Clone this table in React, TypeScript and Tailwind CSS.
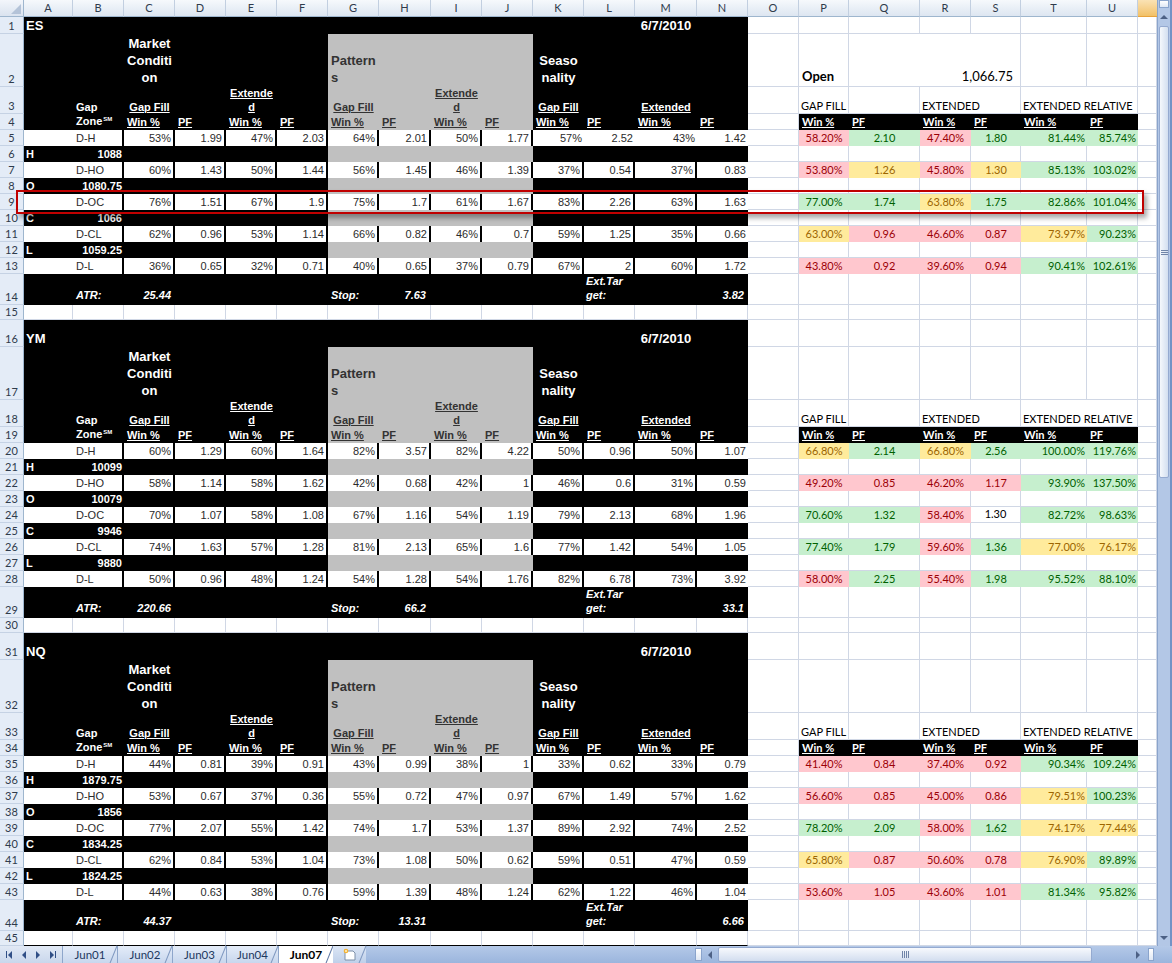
import React from "react";

type Tone = "r" | "y" | "g" | "n";

interface Block {
  start: number;
  sym: string;
  titleH: string;
  rows: string[][];
  levels: [string, string][];
  atr: string;
  stop: string;
  ext: string;
  right: [string, Tone][][];
  open?: boolean;
}

const W: Record<string, string> = {
  A: "w-[49px]", B: "w-[51px]", C: "w-[51px]", D: "w-[51px]", E: "w-[51px]", F: "w-[51px]",
  G: "w-[51px]", H: "w-[52px]", I: "w-[51px]", J: "w-[51px]", K: "w-[51px]", L: "w-[51px]",
  M: "w-[62px]", N: "w-[51px]", O: "w-[51px]", P: "w-[50px]", Q: "w-[71px]", R: "w-[51px]",
  S: "w-[50px]", T: "w-[66px]", U: "w-[51px]", V: "w-[19px]",
};

const LC = ["A", "B", "C", "D", "E", "F", "G", "H", "I", "J", "K", "L", "M", "N"];
const RC = ["O", "P", "Q", "R", "S", "T", "U", "V"];
const ALL = [...LC, ...RC];
const GRAY = new Set(["G", "H", "I", "J"]);
const ZONES = ["D-H", "D-HO", "D-OC", "D-CL", "D-L"];

const grid = "bg-white border-r border-b border-[#d0d7e5]";
const TONE: Record<Tone, string> = {
  r: "bg-[#ffc7ce] text-[#9c0006]",
  y: "bg-[#ffeb9c] text-[#9c6500]",
  g: "bg-[#c6efce] text-[#006100]",
  n: "bg-white text-black border-r border-b border-[#d0d7e5]",
};

const BLOCKS: Block[] = [
  {
    start: 1, sym: "ES", titleH: "h-[17px]", open: true,
    rows: [
      ["53%", "1.99", "47%", "2.03", "64%", "2.01", "50%", "1.77", "57%", "2.52", "43%", "1.42"],
      ["60%", "1.43", "50%", "1.44", "56%", "1.45", "46%", "1.39", "37%", "0.54", "37%", "0.83"],
      ["76%", "1.51", "67%", "1.9", "75%", "1.7", "61%", "1.67", "83%", "2.26", "63%", "1.63"],
      ["62%", "0.96", "53%", "1.14", "66%", "0.82", "46%", "0.7", "59%", "1.25", "35%", "0.66"],
      ["36%", "0.65", "32%", "0.71", "40%", "0.65", "37%", "0.79", "67%", "2", "60%", "1.72"],
    ],
    levels: [["H", "1088"], ["O", "1080.75"], ["C", "1066"], ["L", "1059.25"]],
    atr: "25.44", stop: "7.63", ext: "3.82",
    right: [
      [["58.20%", "r"], ["2.10", "g"], ["47.40%", "r"], ["1.80", "g"], ["81.44%", "g"], ["85.74%", "g"]],
      [["53.80%", "r"], ["1.26", "y"], ["45.80%", "r"], ["1.30", "y"], ["85.13%", "g"], ["103.02%", "g"]],
      [["77.00%", "g"], ["1.74", "g"], ["63.80%", "y"], ["1.75", "g"], ["82.86%", "g"], ["101.04%", "g"]],
      [["63.00%", "y"], ["0.96", "r"], ["46.60%", "r"], ["0.87", "r"], ["73.97%", "y"], ["90.23%", "g"]],
      [["43.80%", "r"], ["0.92", "r"], ["39.60%", "r"], ["0.94", "r"], ["90.41%", "g"], ["102.61%", "g"]],
    ],
  },
  {
    start: 16, sym: "YM", titleH: "h-[27px]",
    rows: [
      ["60%", "1.29", "60%", "1.64", "82%", "3.57", "82%", "4.22", "50%", "0.96", "50%", "1.07"],
      ["58%", "1.14", "58%", "1.62", "42%", "0.68", "42%", "1", "46%", "0.6", "31%", "0.59"],
      ["70%", "1.07", "58%", "1.08", "67%", "1.16", "54%", "1.19", "79%", "2.13", "68%", "1.96"],
      ["74%", "1.63", "57%", "1.28", "81%", "2.13", "65%", "1.6", "77%", "1.42", "54%", "1.05"],
      ["50%", "0.96", "48%", "1.24", "54%", "1.28", "54%", "1.76", "82%", "6.78", "73%", "3.92"],
    ],
    levels: [["H", "10099"], ["O", "10079"], ["C", "9946"], ["L", "9880"]],
    atr: "220.66", stop: "66.2", ext: "33.1",
    right: [
      [["66.80%", "y"], ["2.14", "g"], ["66.80%", "y"], ["2.56", "g"], ["100.00%", "g"], ["119.76%", "g"]],
      [["49.20%", "r"], ["0.85", "r"], ["46.20%", "r"], ["1.17", "r"], ["93.90%", "g"], ["137.50%", "g"]],
      [["70.60%", "g"], ["1.32", "g"], ["58.40%", "r"], ["1.30", "n"], ["82.72%", "g"], ["98.63%", "g"]],
      [["77.40%", "g"], ["1.79", "g"], ["59.60%", "r"], ["1.36", "g"], ["77.00%", "y"], ["76.17%", "y"]],
      [["58.00%", "r"], ["2.25", "g"], ["55.40%", "r"], ["1.98", "g"], ["95.52%", "g"], ["88.10%", "g"]],
    ],
  },
  {
    start: 31, sym: "NQ", titleH: "h-[27px]",
    rows: [
      ["44%", "0.81", "39%", "0.91", "43%", "0.99", "38%", "1", "33%", "0.62", "33%", "0.79"],
      ["53%", "0.67", "37%", "0.36", "55%", "0.72", "47%", "0.97", "67%", "1.49", "57%", "1.62"],
      ["77%", "2.07", "55%", "1.42", "74%", "1.7", "53%", "1.37", "89%", "2.92", "74%", "2.52"],
      ["62%", "0.84", "53%", "1.04", "73%", "1.08", "50%", "0.62", "59%", "0.51", "47%", "0.59"],
      ["44%", "0.63", "38%", "0.76", "59%", "1.39", "48%", "1.24", "62%", "1.22", "46%", "1.04"],
    ],
    levels: [["H", "1879.75"], ["O", "1856"], ["C", "1834.25"], ["L", "1824.25"]],
    atr: "44.37", stop: "13.31", ext: "6.66",
    right: [
      [["41.40%", "r"], ["0.84", "r"], ["37.40%", "r"], ["0.92", "r"], ["90.34%", "g"], ["109.24%", "g"]],
      [["56.60%", "r"], ["0.85", "r"], ["45.00%", "r"], ["0.86", "r"], ["79.51%", "y"], ["100.23%", "g"]],
      [["78.20%", "g"], ["2.09", "g"], ["58.00%", "r"], ["1.62", "g"], ["74.17%", "y"], ["77.44%", "y"]],
      [["65.80%", "y"], ["0.87", "r"], ["50.60%", "r"], ["0.78", "r"], ["76.90%", "y"], ["89.89%", "g"]],
      [["53.60%", "r"], ["1.05", "r"], ["43.60%", "r"], ["1.01", "r"], ["81.34%", "g"], ["95.82%", "g"]],
    ],
  },
];

function Cell({ c, className = "", children }: { c: string; className?: string; children?: React.ReactNode }) {
  return <div className={`${W[c]} shrink-0 h-full ${className}`}>{children}</div>;
}

function Row({ n, h, left, right }: { n: number; h: string; left: React.ReactNode; right: React.ReactNode }) {
  return (
    <div className={`flex ${h}`}>
      <div className="w-[24px] shrink-0 h-full flex items-end justify-center pb-[2px] bg-[#e4ecf7] border-r border-r-[#9eb6ce] border-b border-b-[#c5d2e4] font-['Lato',sans-serif] text-[11px] leading-none text-[#2f3b4c]">
        {n}
      </div>
      <div className="contents font-['Liberation_Sans',Arial,sans-serif]">{left}</div>
      <div className="contents font-['Lato',sans-serif]">{right}</div>
    </div>
  );
}

const bg = (c: string) => (GRAY.has(c) ? "bg-[#c0c0c0]" : "bg-black");
const hWhite = "text-white font-bold";
const hDark = "text-[#333333] font-bold";
const ul = "underline decoration-1 underline-offset-[1px]";

function LeftTitle({ sym }: { sym: string }) {
  return (
    <>
      {LC.map((c) => (
        <Cell key={c} c={c} className="bg-black flex items-end pb-[1px]">
          {c === "A" && <span className={`${hWhite} pl-[2px] text-[13px] leading-[15px]`}>{sym}</span>}
          {c === "M" && <span className={`${hWhite} w-full text-center text-[13px] leading-[15px]`}>6/7/2010</span>}
        </Cell>
      ))}
    </>
  );
}

function LeftHead2() {
  const big = "text-[13px] leading-[17px] whitespace-nowrap";
  return (
    <>
      {LC.map((c) => (
        <Cell key={c} c={c} className={`${bg(c)} flex flex-col justify-end pb-[1px]`}>
          {c === "C" && <div className={`${hWhite} ${big} text-center`}>Market<br />Conditi<br />on</div>}
          {c === "G" && <div className={`${hDark} ${big} pl-[3px]`}>Pattern<br />s</div>}
          {c === "K" && <div className={`${hWhite} ${big} text-center`}>Seaso<br />nality</div>}
        </Cell>
      ))}
    </>
  );
}

function LeftHead3() {
  const t = "text-[11px] leading-[14px] whitespace-nowrap";
  const content: Record<string, React.ReactNode> = {
    B: <div className={`${hWhite} ${t} pl-[3px]`}>Gap</div>,
    C: <div className={`${hWhite} ${t} text-center`}><span className={ul}>Gap Fill</span></div>,
    E: <div className={`${hWhite} ${t} text-center ${ul}`}>Extende<br />d</div>,
    G: <div className={`${hDark} ${t} text-center`}><span className={ul}>Gap Fill</span></div>,
    I: <div className={`${hDark} ${t} text-center ${ul}`}>Extende<br />d</div>,
    K: <div className={`${hWhite} ${t} text-center`}><span className={ul}>Gap Fill</span></div>,
    M: <div className={`${hWhite} ${t} text-center`}><span className={ul}>Extended</span></div>,
  };
  return (
    <>
      {LC.map((c) => (
        <Cell key={c} c={c} className={`${bg(c)} flex flex-col justify-end`}>
          {content[c]}
        </Cell>
      ))}
    </>
  );
}

function LeftHead4() {
  const labels: Record<string, string> = {
    C: "Win %", D: "PF", E: "Win %", F: "PF", G: "Win %", H: "PF", I: "Win %", J: "PF",
    K: "Win %", L: "PF", M: "Win %", N: "PF",
  };
  return (
    <>
      {LC.map((c) => (
        <Cell key={c} c={c} className={`${bg(c)} flex items-center text-[11px] leading-[14px] whitespace-nowrap`}>
          {c === "B" && (
            <span className={`${hWhite} pl-[3px]`}>
              Zone<span className="relative -top-[4px] ml-[1px] text-[6px]">SM</span>
            </span>
          )}
          {labels[c] && (
            <span className={`${GRAY.has(c) ? hDark : hWhite} ${ul} pl-[3px]`}>{labels[c]}</span>
          )}
        </Cell>
      ))}
    </>
  );
}

function LeftData({ zone, vals, plainK }: { zone: string; vals: string[]; plainK: boolean }) {
  const t = "text-[11px] text-[#2b2b2b]";
  return (
    <>
      <Cell c="A" className="bg-white" />
      <Cell c="B" className={`bg-white border-r-2 border-black flex items-center pl-[3px] ${t}`}>{zone}</Cell>
      {vals.map((v, i) => {
        const c = LC[i + 2];
        const br = c === "N" || (plainK && i >= 8) ? "" : "border-r-2 border-black";
        return (
          <Cell key={c} c={c} className={`bg-white ${br} flex items-center justify-end pr-[2px] ${t}`}>
            {v}
          </Cell>
        );
      })}
    </>
  );
}

function LeftLevel({ l }: { l: [string, string] }) {
  const t = `${hWhite} text-[11px] leading-[14px]`;
  return (
    <>
      {LC.map((c) => (
        <Cell key={c} c={c} className={`${bg(c)} flex items-center`}>
          {c === "A" && <span className={`${t} pl-[2px]`}>{l[0]}</span>}
          {c === "B" && <span className={`${t} w-full text-right pr-[2px]`}>{l[1]}</span>}
        </Cell>
      ))}
    </>
  );
}

function LeftAtr({ b }: { b: Block }) {
  const t = "text-white font-bold italic text-[11px] leading-[14px] whitespace-nowrap";
  const content: Record<string, React.ReactNode> = {
    B: <div className={`${t} pl-[3px]`}>ATR:</div>,
    C: <div className={`${t} text-right pr-[4px]`}>{b.atr}</div>,
    G: <div className={`${t} pl-[3px]`}>Stop:</div>,
    H: <div className={`${t} text-right pr-[5px]`}>{b.stop}</div>,
    L: <div className={`${t} pl-[2px]`}>Ext.Tar<br />get:</div>,
    N: <div className={`${t} text-right pr-[4px]`}>{b.ext}</div>,
  };
  return (
    <>
      {LC.map((c) => (
        <Cell key={c} c={c} className="bg-black flex flex-col justify-end pb-[3px]">
          {content[c]}
        </Cell>
      ))}
    </>
  );
}

function LeftBlank({ edge }: { edge: boolean }) {
  return (
    <>
      {LC.map((c) => (
        <Cell key={c} c={c} className={`bg-white border-r border-[#d0d7e5] border-b ${edge ? "border-b-black" : ""}`} />
      ))}
    </>
  );
}

function RightPlain() {
  return (
    <>
      {RC.map((c) => (
        <Cell key={c} c={c} className={grid} />
      ))}
    </>
  );
}

function RightOpen() {
  return (
    <>
      <Cell c="O" className={grid} />
      <Cell c="P" className={`${grid} flex items-end pb-[2px] pl-[3px]`}>
        <span className="font-bold text-[13px] leading-[16px] text-black">Open</span>
      </Cell>
      <div className={`w-[172px] shrink-0 h-full ${grid} flex items-end justify-end pb-[2px] pr-[7px]`}>
        <span className="text-[13px] leading-[16px] text-black">1,066.75</span>
      </div>
      <Cell c="T" className={grid} />
      <Cell c="U" className={grid} />
      <Cell c="V" className={grid} />
    </>
  );
}

function RightHead3() {
  const t = "relative z-[1] text-[11px] leading-[14px] text-black whitespace-nowrap pl-[2px]";
  return (
    <>
      <Cell c="O" className={grid} />
      <Cell c="P" className={`${grid} flex items-end`}><span className={t}>GAP FILL</span></Cell>
      <Cell c="Q" className={grid} />
      <Cell c="R" className="bg-white border-b border-[#d0d7e5] flex items-end"><span className={t}>EXTENDED</span></Cell>
      <Cell c="S" className={grid} />
      <Cell c="T" className="bg-white border-b border-[#d0d7e5] flex items-end"><span className={t}>EXTENDED RELATIVE</span></Cell>
      <Cell c="U" className={grid} />
      <Cell c="V" className={grid} />
    </>
  );
}

function RightHead4() {
  const labels = ["Win %", "PF", "Win %", "PF", "Win %", "PF"];
  return (
    <>
      <Cell c="O" className={grid} />
      {labels.map((l, i) => (
        <Cell key={i} c={RC[i + 1]} className="bg-black flex items-center pl-[3px]">
          <span className={`text-white font-bold text-[11px] leading-[14px] ${ul}`}>{l}</span>
        </Cell>
      ))}
      <Cell c="V" className={grid} />
    </>
  );
}

function RightData({ vals }: { vals: [string, Tone][] }) {
  return (
    <>
      <Cell c="O" className={grid} />
      {vals.map(([v, tone], i) => {
        const c = RC[i + 1];
        const align = i >= 4 ? "justify-end pr-[2px]" : "justify-center";
        return (
          <Cell key={c} c={c} className={`${TONE[tone]} flex items-center ${align} text-[11px]`}>
            {v}
          </Cell>
        );
      })}
      <Cell c="V" className={grid} />
    </>
  );
}

function BlockRows({ b, last }: { b: Block; last: boolean }) {
  const s = b.start;
  const out: React.ReactNode[] = [];
  out.push(<Row key="t" n={s} h={b.titleH} left={<LeftTitle sym={b.sym} />} right={<RightPlain />} />);
  out.push(<Row key="h2" n={s + 1} h="h-[53px]" left={<LeftHead2 />} right={b.open ? <RightOpen /> : <RightPlain />} />);
  out.push(<Row key="h3" n={s + 2} h="h-[27px]" left={<LeftHead3 />} right={<RightHead3 />} />);
  out.push(<Row key="h4" n={s + 3} h="h-[16px]" left={<LeftHead4 />} right={<RightHead4 />} />);
  for (let i = 0; i < 9; i++) {
    const n = s + 4 + i;
    if (i % 2 === 0) {
      const k = i / 2;
      out.push(
        <Row
          key={n}
          n={n}
          h="h-[16px]"
          left={<LeftData zone={ZONES[k]} vals={b.rows[k]} plainK={b.start === 1 && k === 0} />}
          right={<RightData vals={b.right[k]} />}
        />
      );
    } else {
      const k = (i - 1) / 2;
      out.push(<Row key={n} n={n} h="h-[16px]" left={<LeftLevel l={b.levels[k]} />} right={<RightPlain />} />);
    }
  }
  out.push(<Row key="atr" n={s + 13} h="h-[31px]" left={<LeftAtr b={b} />} right={<RightPlain />} />);
  out.push(<Row key="bl" n={s + 14} h="h-[15px]" left={<LeftBlank edge={last} />} right={<RightPlain />} />);
  return <>{out}</>;
}

function ColHeader() {
  return (
    <div className="flex h-[17px] font-['Lato',sans-serif]">
      <div className="relative w-[24px] shrink-0 h-full bg-linear-to-b from-[#f3f6fb] to-[#dae3ef] border-r border-[#9eb6ce] border-b border-b-[#9eb6ce]">
        <svg className="absolute right-[2px] bottom-[2px]" width="10" height="10" viewBox="0 0 10 10">
          <polygon points="10,0 10,10 0,10" fill="#b4c3d8" />
        </svg>
      </div>
      {ALL.map((c) =>
        c === "V" ? (
          <div key={c} className={`${W[c]} shrink-0 h-full bg-linear-to-b from-[#fae2b4] to-[#f2c166] border-b border-[#e8a33c]`} />
        ) : (
          <div
            key={c}
            className={`${W[c]} shrink-0 h-full flex items-center justify-center bg-linear-to-b from-[#f6f9fc] to-[#dde6f1] border-r border-[#c2cfe0] border-b border-b-[#9eb6ce] text-[11px] text-[#2f3b4c]`}
          >
            {c}
          </div>
        )
      )}
    </div>
  );
}

function Tri({ dir, color = "#4d6185" }: { dir: "up" | "down" | "left" | "right"; color?: string }) {
  const pts = {
    up: "0,5 4,1 8,5",
    down: "0,1 4,5 8,1",
    left: "5,0 1,4 5,8",
    right: "1,0 5,4 1,8",
  }[dir];
  const vert = dir === "up" || dir === "down";
  return (
    <svg width={vert ? 8 : 6} height={vert ? 6 : 8} viewBox={vert ? "0 0 8 6" : "0 0 6 8"}>
      <polygon points={pts} fill={color} />
    </svg>
  );
}

function VScroll() {
  return (
    <div className="w-[15px] h-[946px] shrink-0 flex">
      <div className="w-[13px] h-full flex flex-col bg-[#b3c7e6] border-l border-[#8aa4cc]">
        <div className="h-[8px] shrink-0 mx-[1px] bg-linear-to-b from-[#ffffff] to-[#dfe8f5] border border-[#8aa4cc]" />
        <div className="h-[18px] shrink-0 flex items-center justify-center">
          <Tri dir="up" />
        </div>
        <div className="h-[452px] shrink-0 mx-[1px] rounded-[2px] border border-[#95aad0] bg-linear-to-r from-[#f5f8fc] to-[#d3dff0] flex items-center justify-center">
          <div className="flex flex-col gap-[1px]">
            <div className="w-[7px] h-px bg-[#6f84a8]" />
            <div className="w-[7px] h-px bg-[#6f84a8]" />
            <div className="w-[7px] h-px bg-[#6f84a8]" />
          </div>
        </div>
        <div className="flex-1" />
        <div className="h-[16px] shrink-0 flex items-center justify-center">
          <Tri dir="down" />
        </div>
      </div>
      <div className="w-[2px] h-full bg-[#7393c5]" />
    </div>
  );
}

function TabBar() {
  const tabs = [
    { t: "Jun01", w: "w-[55px]" },
    { t: "Jun02", w: "w-[55px]" },
    { t: "Jun03", w: "w-[54px]" },
    { t: "Jun04", w: "w-[52px]" },
  ];
  return (
    <div className="h-[17px] flex bg-linear-to-b from-[#b4c9e8] to-[#9bb5dd] font-['Lato',sans-serif]">
      <div className="w-[62px] shrink-0 h-full flex items-center justify-around px-[2px] bg-linear-to-b from-[#e1e9f5] to-[#c9d7ec]">
        <div className="flex items-center">
          <div className="w-px h-[7px] bg-[#304f86]" />
          <Tri dir="left" color="#304f86" />
        </div>
        <Tri dir="left" color="#304f86" />
        <Tri dir="right" color="#304f86" />
        <div className="flex items-center">
          <Tri dir="right" color="#304f86" />
          <div className="w-px h-[7px] bg-[#304f86]" />
        </div>
      </div>
      {tabs.map((tab) => (
        <div
          key={tab.t}
          className={`${tab.w} shrink-0 h-full relative flex items-center justify-center bg-linear-to-b from-[#e4ecf8] to-[#c8d7ee] border-l border-[#8ea6cb] text-[11.5px] text-[#1d3860]`}
        >
          {tab.t}
          <div className="absolute right-[3px] top-[-1px] h-[19px] w-px bg-[#7f98c0] rotate-[22deg]" />
        </div>
      ))}
      <div className="w-[55px] shrink-0 h-full relative flex items-center justify-center bg-white border-l border-[#8ea6cb] text-[12px] font-bold text-black">
        Jun07
        <div className="absolute right-[3px] top-[-1px] h-[19px] w-px bg-[#5f79a6] rotate-[22deg]" />
      </div>
      <div className="w-[33px] shrink-0 h-full relative flex items-center justify-center bg-linear-to-b from-[#dce6f5] to-[#bfd0ea]">
        <svg width="16" height="13" viewBox="0 0 16 13">
          <path d="M3 3 H11 L13 5 V12 H3 Z" fill="#ffffff" stroke="#7d8fa8" strokeWidth="1" />
          <circle cx="4" cy="3" r="2.3" fill="#f5b335" />
          <circle cx="4" cy="3" r="1" fill="#fff3c8" />
        </svg>
        <div className="absolute right-[3px] top-[-1px] h-[19px] w-px bg-[#7f98c0] rotate-[22deg]" />
      </div>
      <div className="flex-1" />
      <div className="w-[478px] shrink-0 h-full flex items-center">
        <div className="w-[7px] h-[13px] ml-[1px] bg-linear-to-b from-white to-[#dfe7f3] border border-[#8aa4cc]" />
        <div className="w-[16px] h-full flex items-center justify-center">
          <Tri dir="left" />
        </div>
        <div className="w-[374px] h-[15px] rounded-[2px] border border-[#95aad0] bg-linear-to-b from-[#f7f9fd] to-[#d2ddef] flex items-center justify-center">
          <div className="flex gap-[1px]">
            <div className="w-px h-[7px] bg-[#6f84a8]" />
            <div className="w-px h-[7px] bg-[#6f84a8]" />
            <div className="w-px h-[7px] bg-[#6f84a8]" />
            <div className="w-px h-[7px] bg-[#6f84a8]" />
          </div>
        </div>
        <div className="w-[38px]" />
        <div className="w-[16px] h-full flex items-center justify-center">
          <Tri dir="right" />
        </div>
        <div className="w-[6px] h-[13px] ml-[2px] bg-linear-to-b from-white to-[#dfe7f3] border border-[#8aa4cc]" />
      </div>
    </div>
  );
}

export default function App() {
  return (
    <div className="w-[1172px] h-[963px] overflow-hidden bg-white flex flex-col select-none">
      <div className="flex h-[946px]">
        <div className="relative w-[1157px] h-[946px] overflow-hidden">
          <ColHeader />
          {BLOCKS.map((b) => (
            <BlockRows key={b.sym} b={b} last={b.sym === "NQ"} />
          ))}
          <div className="absolute left-[16px] top-[190px] w-[1128px] h-[24px] border-2 border-[#c00000] shadow-[3px_4px_5px_rgba(0,0,0,0.35)] pointer-events-none" />
        </div>
        <VScroll />
      </div>
      <TabBar />
    </div>
  );
}
